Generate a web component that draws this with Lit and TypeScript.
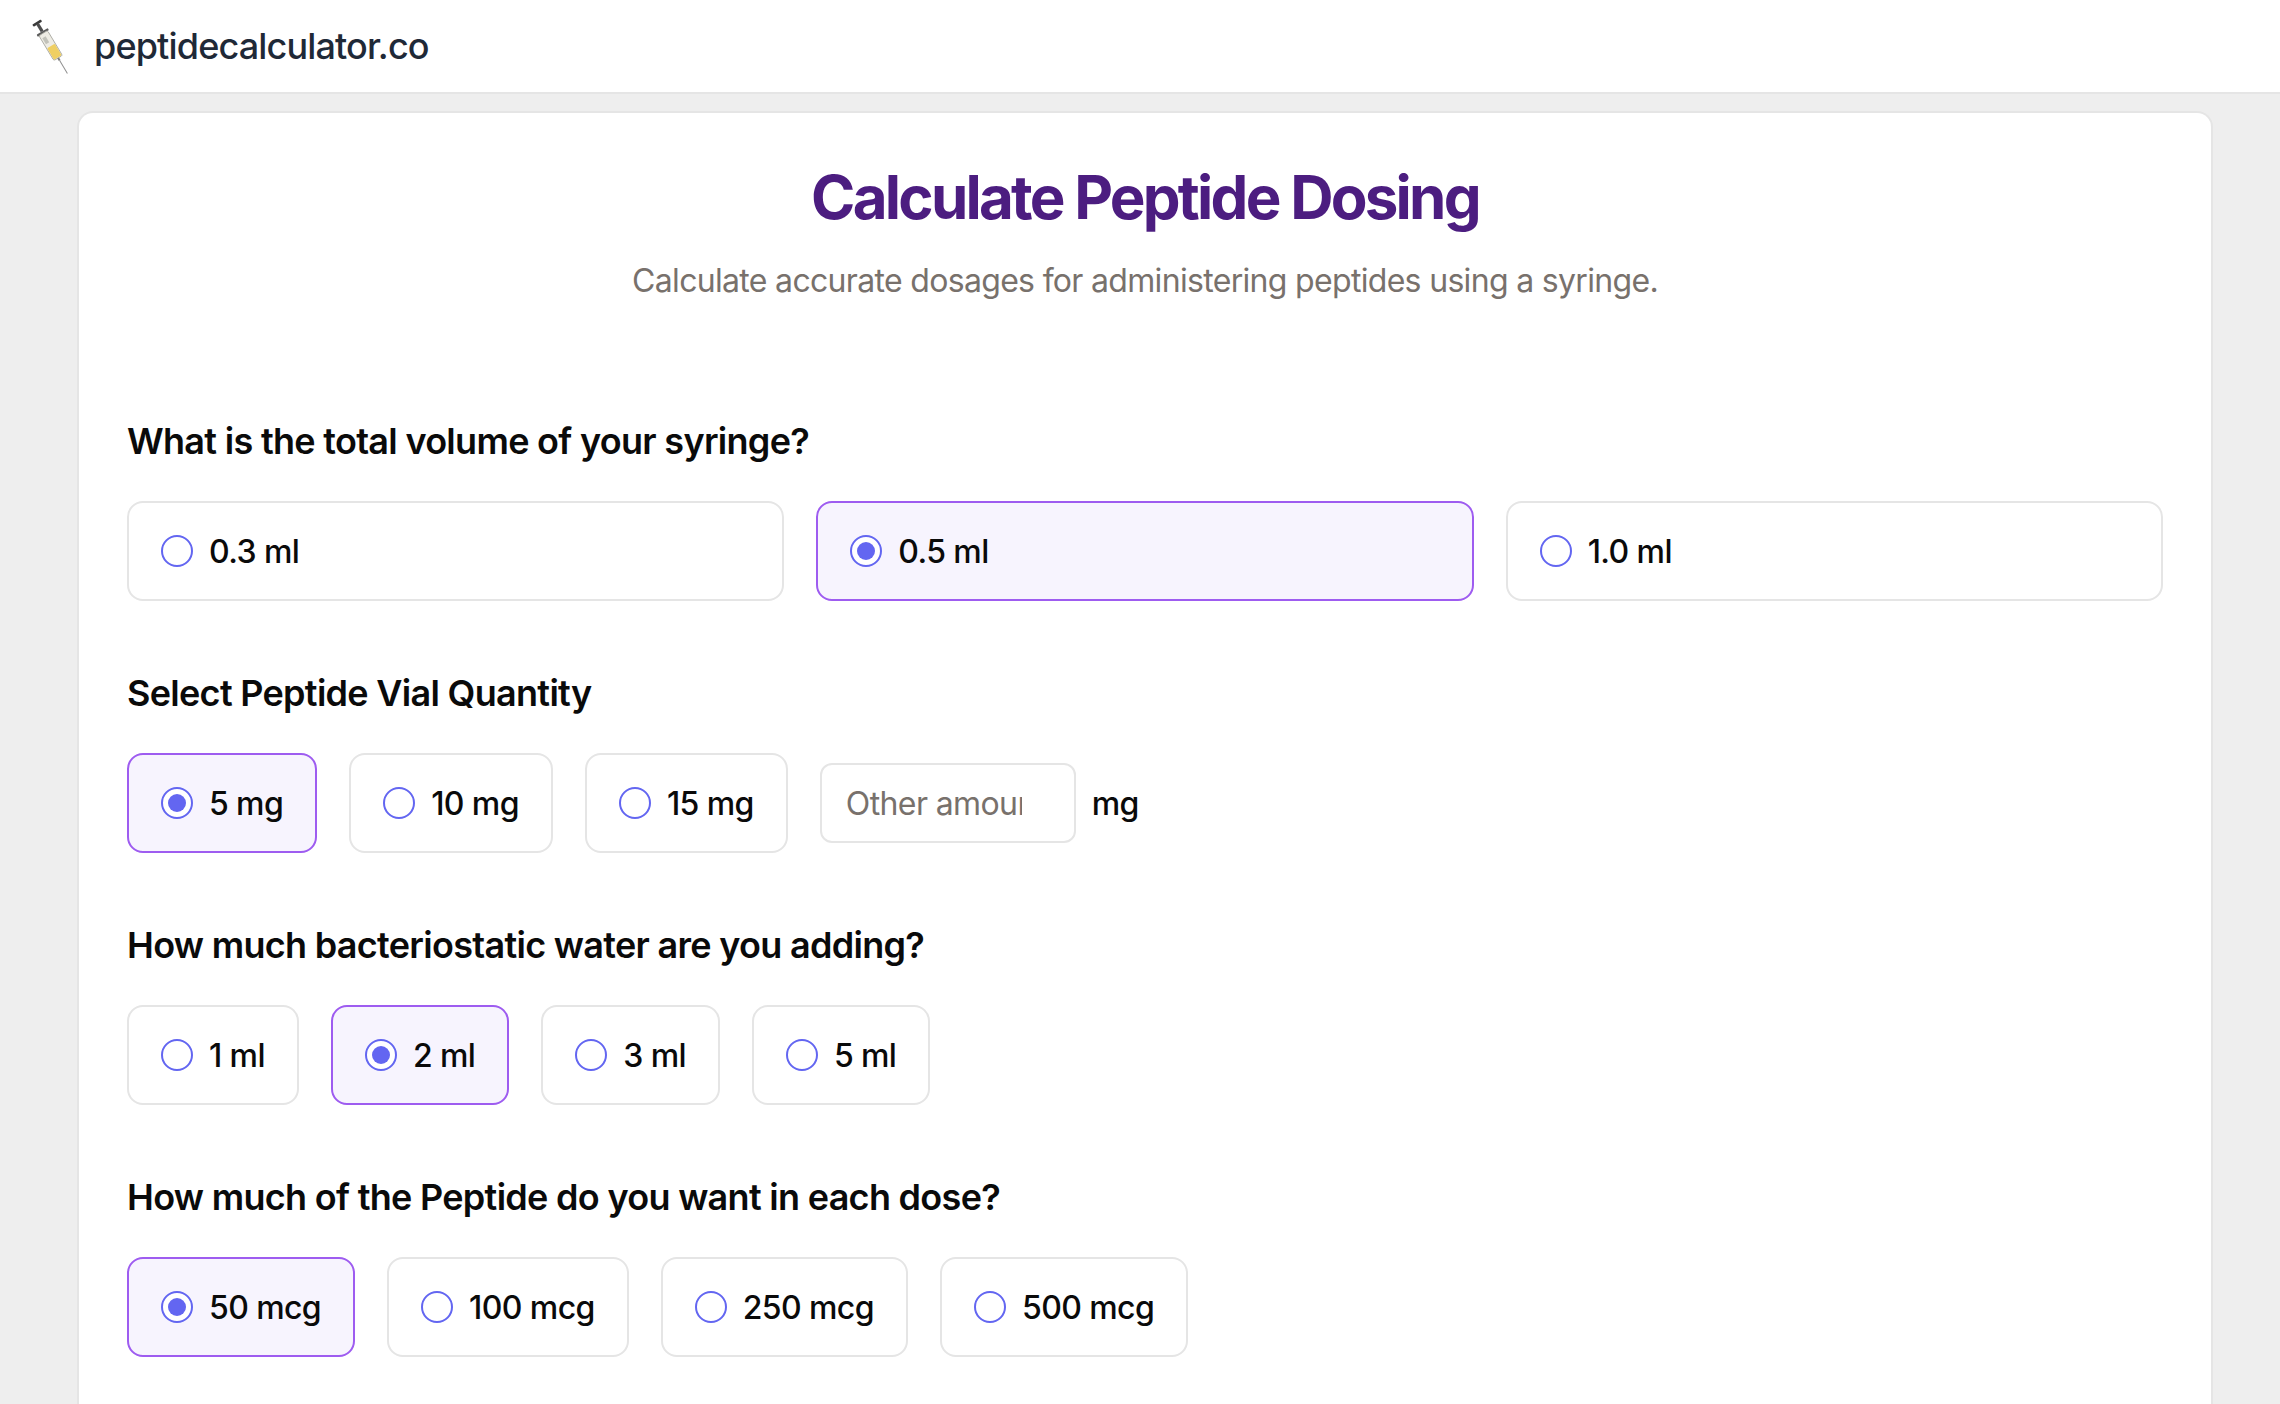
import { LitElement, html, css, svg } from "lit";
import { customElement } from "lit/decorators.js";
import { classMap } from "lit/directives/class-map.js";

const syringe = svg`<g transform="translate(12.5 6) rotate(-31)">
  <rect x="-5" y="0" width="10" height="2.6" rx="0.8" fill="#3a3a3a"/>
  <rect x="-1.6" y="2" width="3.2" height="9" fill="#4d4d4d"/>
  <rect x="-6.5" y="11" width="13" height="2.4" rx="0.8" fill="#5c5c5c"/>
  <rect x="-5" y="13" width="10" height="29" rx="1.5" fill="#eeece4" stroke="#a5a59d" stroke-width="0.8"/>
  <rect x="-4.4" y="28" width="8.8" height="13.4" rx="1" fill="#efcf62"/>
  <rect x="-3.4" y="17" width="3.8" height="7" fill="#c2c2ba"/>
  <rect x="-1" y="42" width="2" height="3" fill="#7d7d7d"/>
  <rect x="-0.5" y="45" width="1" height="15" fill="#8f8f8f"/>
</g>`;

const sections = [
  { title: "What is the total volume of your syringe?", wide: true, options: ["0.3 ml", "0.5 ml", "1.0 ml"], selected: 1 },
  { title: "Select Peptide Vial Quantity", wide: false, options: ["5 mg", "10 mg", "15 mg"], selected: 0, other: true },
  { title: "How much bacteriostatic water are you adding?", wide: false, options: ["1 ml", "2 ml", "3 ml", "5 ml"], selected: 1 },
  { title: "How much of the Peptide do you want in each dose?", wide: false, options: ["50 mcg", "100 mcg", "250 mcg", "500 mcg"], selected: 0 },
];

@customElement("app-root")
export class AppRoot extends LitElement {
  static styles = css`
    :host {
      display: block;
      height: 1404px;
      overflow: hidden;
      background: #eeeeee;
      font-family: Inter, "Liberation Sans", sans-serif;
      color: #0a0a0a;
    }
    .nav {
      height: 92px;
      background: #fff;
      border-bottom: 2px solid #e5e5e5;
      display: flex;
      align-items: center;
      padding-left: 24px;
      gap: 16px;
      box-sizing: content-box;
    }
    .logo { width: 54px; height: 60px; flex: none; }
    .brand { font-size: 36px; font-weight: 500; color: #1f2937; letter-spacing: -0.85px; }
    .card {
      margin: 17px 67px 0 77px;
      background: #fff;
      border: 2px solid #e5e5e5;
      border-bottom: none;
      border-radius: 16px 16px 0 0;
      padding: 50px 48px 300px 48px;
      box-sizing: border-box;
    }
    h1 {
      margin: 0;
      text-align: center;
      color: #4c1d80;
      font-size: 60px;
      line-height: 68px;
      font-weight: 700;
      letter-spacing: -2.75px;
    }
    .sub {
      margin: 26px 0 0;
      text-align: center;
      color: #78716c;
      font-size: 32px;
      line-height: 48px;
      letter-spacing: -0.68px;
    }
    .sections { margin-top: 112px; display: flex; flex-direction: column; gap: 68px; }
    h2 { margin: 0 0 36px; font-size: 36px; line-height: 48px; font-weight: 600; color: #0a0a0a; letter-spacing: -0.7px; }
    .row { display: flex; gap: 32px; align-items: center; }
    .opt {
      display: flex;
      align-items: center;
      gap: 16px;
      height: 100px;
      box-sizing: border-box;
      padding: 0 32px;
      border: 2px solid #e5e5e5;
      border-radius: 16px;
      background: #fff;
      font-size: 32px;
      font-weight: 500;
      letter-spacing: -0.6px;
    }
    .wide .opt { flex: 1 1 0; }
    .opt.on { border-color: #9e5cf0; background: #f7f4fe; }
    .radio {
      width: 32px;
      height: 32px;
      box-sizing: border-box;
      border: 2px solid #6366f1;
      border-radius: 50%;
      background: #fff;
      display: flex;
      align-items: center;
      justify-content: center;
      flex: none;
    }
    .on .radio::after {
      content: "";
      width: 18px;
      height: 18px;
      border-radius: 50%;
      background: #6366f1;
    }
    .other { display: flex; align-items: center; gap: 16px; font-size: 32px; font-weight: 500; letter-spacing: -0.6px; }
    input {
      width: 256px;
      height: 80px;
      box-sizing: border-box;
      padding: 0 52px 0 24px;
      border: 2px solid #e5e5e5;
      border-radius: 12px;
      font: 400 32px Inter, sans-serif;
      letter-spacing: -0.6px;
      outline: none;
      background: #fff;
    }
    input::placeholder { color: #78716c; opacity: 1; }
  `;

  render() {
    return html`
      <div class="nav">
        <svg class="logo" viewBox="0 0 54 60" aria-hidden="true">${syringe}</svg>
        <span class="brand">peptidecalculator.co</span>
      </div>
      <main class="card">
        <h1>Calculate Peptide Dosing</h1>
        <p class="sub">Calculate accurate dosages for administering peptides using a syringe.</p>
        <div class="sections">
          ${sections.map(
            (s) => html`
              <section>
                <h2>${s.title}</h2>
                <div class=${classMap({ row: true, wide: s.wide })}>
                  ${s.options.map(
                    (o, i) => html`
                      <div class=${classMap({ opt: true, on: i === s.selected })}>
                        <span class="radio"></span><span>${o}</span>
                      </div>
                    `
                  )}
                  ${s.other
                    ? html`<div class="other"><input placeholder="Other amount" /><span>mg</span></div>`
                    : ""}
                </div>
              </section>
            `
          )}
        </div>
      </main>
    `;
  }
}
